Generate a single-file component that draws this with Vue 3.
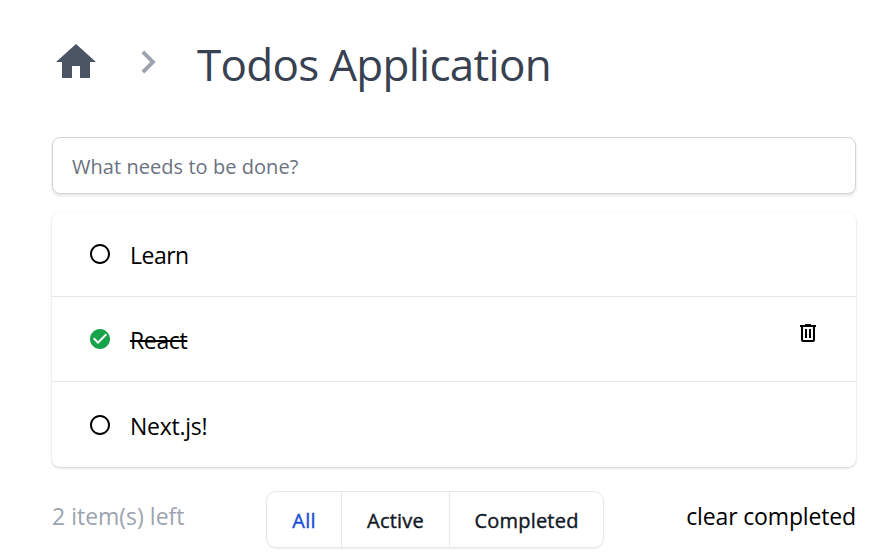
<script setup>
import { ref } from 'vue'

const todos = ref([
  { id: 1, text: 'Learn', done: false },
  { id: 2, text: 'React', done: true },
  { id: 3, text: 'Next.js!', done: false },
])
const filters = ['All', 'Active', 'Completed']
const current = ref('All')
const draft = ref('')
</script>

<template>
  <main class="page">
    <header class="head">
      <svg class="home" viewBox="0 0 24 24"><path d="M10 20v-6h4v6h5v-8h3L12 3 2 12h3v8z" /></svg>
      <svg class="chevron" viewBox="0 0 24 24"><path d="M10 6 8.59 7.41 13.17 12l-4.58 4.59L10 18l6-6z" /></svg>
      <h1 class="title">Todos Application</h1>
    </header>

    <input v-model="draft" class="entry" type="text" placeholder="What needs to be done?" />

    <ul class="list">
      <li v-for="todo in todos" :key="todo.id" class="row">
        <svg v-if="todo.done" class="mark done" viewBox="0 0 24 24">
          <path d="M12 2C6.48 2 2 6.48 2 12s4.48 10 10 10 10-4.48 10-10S17.52 2 12 2zm-2 15-5-5 1.41-1.41L10 14.17l7.59-7.59L19 8l-9 9z" />
        </svg>
        <svg v-else class="mark" viewBox="0 0 24 24">
          <path d="M12 2C6.48 2 2 6.48 2 12s4.48 10 10 10 10-4.48 10-10S17.52 2 12 2zm0 18c-4.42 0-8-3.58-8-8s3.58-8 8-8 8 3.58 8 8-3.58 8-8 8z" />
        </svg>
        <span class="label" :class="{ struck: todo.done }">{{ todo.text }}</span>
        <svg v-if="todo.done" class="trash" viewBox="0 0 24 24">
          <path d="M9 3v1H4v2h1v13a2 2 0 0 0 2 2h10a2 2 0 0 0 2-2V6h1V4h-5V3H9M7 6h10v13H7V6m2 2v9h2V8H9m4 0v9h2V8h-2z" />
        </svg>
      </li>
    </ul>

    <footer class="foot">
      <span class="count">2 item(s) left</span>
      <div class="filters">
        <button v-for="f in filters" :key="f" class="filter" :class="[f.toLowerCase(), { on: f === current }]" @click="current = f">{{ f }}</button>
      </div>
      <button class="clear">clear completed</button>
    </footer>
  </main>
</template>

<style>
body { background: #fff; }
</style>

<style scoped>
.page {
  box-sizing: border-box;
  width: 880px;
  height: 557px;
  padding: 30px 24px 0 52px;
  overflow: hidden;
  font-family: "Open Sans", "Noto Sans", sans-serif;
  color: #000;
}
.head { display: flex; align-items: flex-start; height: 107px; }
.home { width: 48px; height: 48px; margin-top: 8px; fill: #4b5563; }
.chevron { width: 46px; height: 46px; margin: 9px 0 0 25px; fill: #9ca3af; }
.title { margin: 0 0 0 26px; font-size: 44px; line-height: 68px; font-weight: 400; letter-spacing: -0.72px; color: #374151; white-space: nowrap; }
.entry {
  display: block; box-sizing: border-box; width: 804px; height: 57px; padding: 2px 19px 0 19px;
  border: 1px solid #d1d5db; border-radius: 8px; background: #fff; outline: none;
  box-shadow: 0 2px 3px rgba(0, 0, 0, .1);
  font-family: inherit; font-size: 20px; letter-spacing: 0.05px;
}
.entry::placeholder { color: #6b7280; opacity: 1; }
.list { list-style: none; margin: 18px 0 0; padding: 0; width: 804px; height: 255px; border-radius: 8px; box-shadow: 0 1px 3px rgba(0, 0, 0, .1), 0 1px 2px rgba(0, 0, 0, .1); }
.row { display: flex; box-sizing: border-box; height: 85px; padding: 0 36px; border-bottom: 1px solid #e5e7eb; }
.row:last-child { border-bottom: 0; padding-top: 1px; }
.mark { width: 24px; height: 24px; margin-top: 30px; }
.mark.done { fill: #16a34a; }
.label { margin: 26px 0 0 18px; font-size: 23px; line-height: 34px; height: 34px; letter-spacing: -0.5px; }
.row:last-child .label { letter-spacing: -0.25px; }
.label.struck { letter-spacing: -0.35px; text-decoration: line-through; text-decoration-thickness: 2px; }
.trash { width: 24px; height: 24px; margin: 24px 0 0 auto; }
.foot { display: flex; width: 804px; margin-top: 24px; }
.count { width: 214px; font-size: 23px; line-height: 51px; color: #9ca3af; white-space: nowrap; }
.filters { display: flex; box-sizing: border-box; width: 338px; height: 57px; border: 1px solid #e5e7eb; border-radius: 10px; box-shadow: 0 1px 2px rgba(0, 0, 0, .07); }
.filter { box-sizing: border-box; padding: 0; border: 0; border-right: 1px solid #e5e7eb; background: none; font-family: inherit; font-size: 20px; line-height: 57px; font-weight: 500; letter-spacing: 0.22px; -webkit-text-stroke: 0.4px currentColor; color: #111827; }
.filter.all { width: 75px; }
.filter.active { width: 108px; }
.filter.completed { flex: 1; border-right: 0; }
.filter.on { color: #1d4ed8; }
.clear { margin-left: auto; padding: 0; border: 0; background: none; font-family: inherit; font-size: 23px; letter-spacing: -0.15px; line-height: 51px; height: 51px; color: #000; white-space: nowrap; }
</style>
